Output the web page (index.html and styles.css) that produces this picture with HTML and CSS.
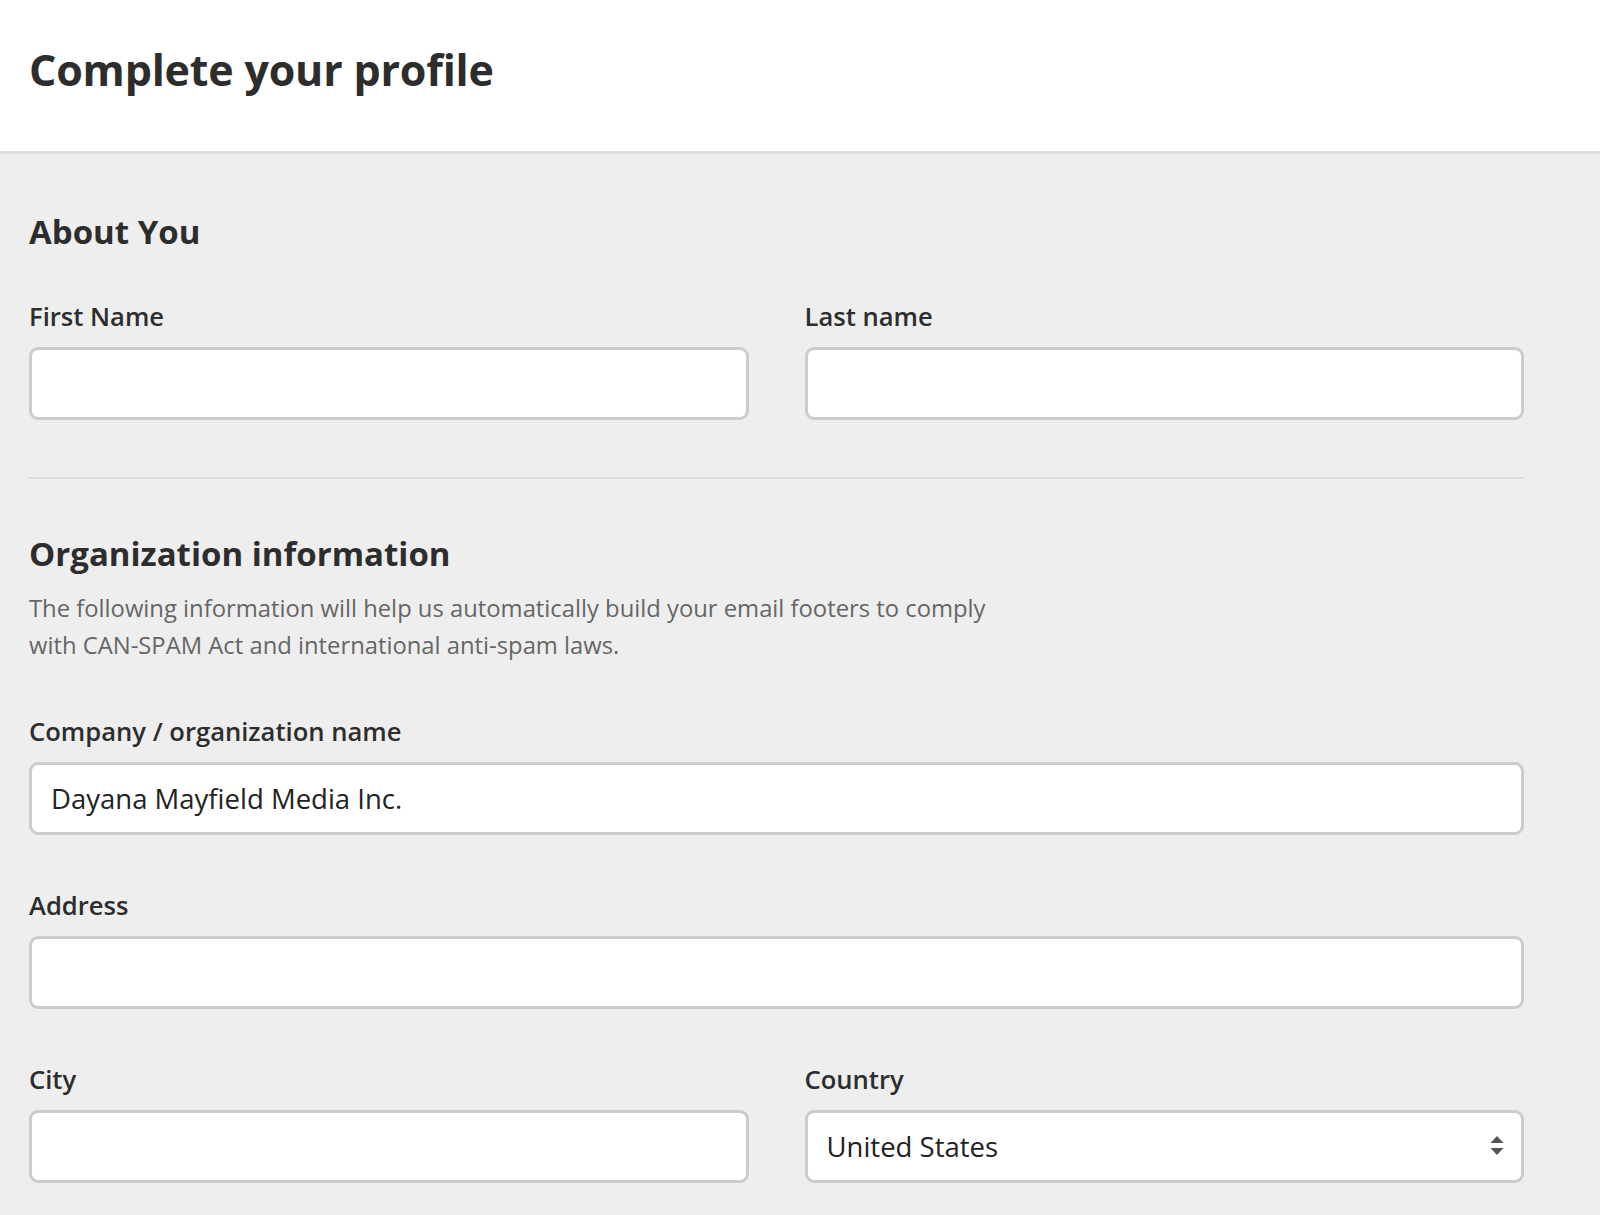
FILE: index.html
```html
<!DOCTYPE html>
<html lang="en">
<head>
<meta charset="utf-8">
<title>Complete your profile</title>
<link rel="stylesheet" href="styles.css">
</head>
<body>
<header class="page-header">
  <h1 class="page-title">Complete your profile</h1>
</header>
<main class="content">
  <section class="section">
    <h2 class="section-title">About You</h2>
    <div class="row">
      <div class="field">
        <label class="field-label" for="first">First Name</label>
        <input class="field-input" id="first" type="text">
      </div>
      <div class="field">
        <label class="field-label" for="last">Last name</label>
        <input class="field-input" id="last" type="text">
      </div>
    </div>
  </section>
  <hr class="divider">
  <section class="section">
    <h2 class="section-title section-title--org">Organization information</h2>
    <p class="section-desc">The following information will help us automatically build your email footers to comply<br>with CAN-SPAM Act and international anti-spam laws.</p>
    <div class="field">
      <label class="field-label" for="company">Company / organization name</label>
      <input class="field-input" id="company" type="text" value="Dayana Mayfield Media Inc.">
    </div>
    <div class="field">
      <label class="field-label" for="address">Address</label>
      <input class="field-input" id="address" type="text">
    </div>
    <div class="row">
      <div class="field">
        <label class="field-label" for="city">City</label>
        <input class="field-input" id="city" type="text">
      </div>
      <div class="field">
        <label class="field-label" for="country">Country</label>
        <div class="select-wrap">
          <select class="field-input field-select" id="country">
            <option>United States</option>
            <option>Canada</option>
            <option>United Kingdom</option>
          </select>
          <svg class="select-arrows" width="14" height="24" viewBox="0 0 14 24" aria-hidden="true">
            <path d="M7 2 L13.5 9 L0.5 9 Z" fill="#555"/>
            <path d="M0.5 14 L13.5 14 L7 21 Z" fill="#555"/>
          </svg>
        </div>
      </div>
    </div>
  </section>
</main>
</body>
</html>
```

FILE: styles.css
```css
* {
  box-sizing: border-box;
}

html, body {
  margin: 0;
  padding: 0;
}

body {
  background: #eeeeee;
  font-family: "Open Sans", "Liberation Sans", sans-serif;
  color: #333333;
  min-height: 1215px;
}

.page-header {
  background: #ffffff;
  height: 154px;
  border-bottom: 3px solid #e0e0e0;
  padding: 45px 29px 0;
}

.page-title {
  margin: 0;
  font-size: 43px;
  line-height: 50px;
  font-weight: 700;
  color: #2d2d2d;
  letter-spacing: -0.2px;
}

.content {
  width: 1495px;
  margin-left: 29px;
  padding-bottom: 40px;
}

.section-title {
  margin: 58px 0 0;
  font-size: 33px;
  line-height: 40px;
  font-weight: 700;
  color: #2d2d2d;
}

.section-title--org {
  margin-top: 55px;
}

.section-desc {
  margin: 16px 0 0;
  font-size: 23.8px;
  line-height: 37px;
  color: #666666;
}

.row {
  display: grid;
  grid-template-columns: 1fr 1fr;
  column-gap: 56px;
}

.field {
  display: flex;
  flex-direction: column;
}

.section-desc + .field {
  margin-top: 53px;
}

.field + .field,
.field + .row {
  margin-top: 56px;
}

.row > .field {
  margin-top: 0;
}

.section-title + .row {
  margin-top: 50px;
}

.field-label {
  display: block;
  font-size: 25.6px;
  line-height: 30px;
  font-weight: 600;
  color: #2d2d2d;
  margin-bottom: 15px;
}

.field-input {
  display: block;
  width: 100%;
  height: 73px;
  border: 3px solid #cccccc;
  border-radius: 9px;
  background: #ffffff;
  padding: 0 19px;
  font-family: "Open Sans", "Liberation Sans", sans-serif;
  font-size: 27.5px;
  color: #222222;
  outline: none;
}

.select-wrap {
  position: relative;
}

.field-select {
  appearance: none;
  -webkit-appearance: none;
  padding-right: 50px;
}

.select-arrows {
  position: absolute;
  right: 20px;
  top: 24px;
  pointer-events: none;
}

.divider {
  margin: 57px 0 0;
  border: 0;
  height: 2px;
  background: #dedede;
}
```
